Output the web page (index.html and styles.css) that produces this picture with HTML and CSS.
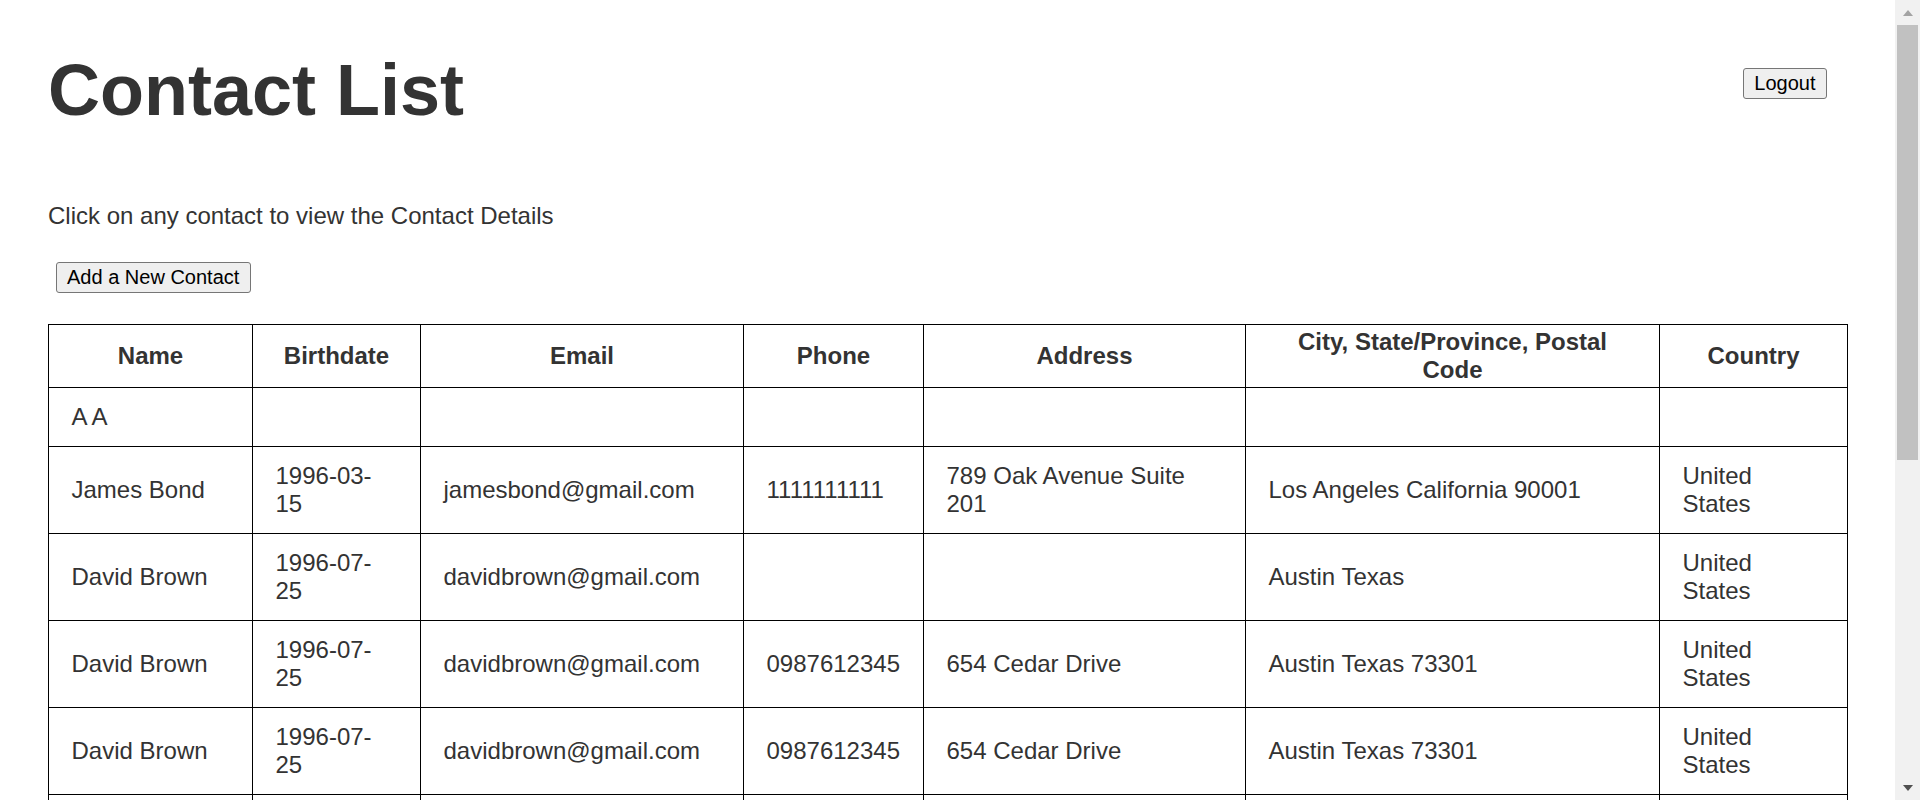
FILE: index.html
```html
<!DOCTYPE html>
<html lang="en">
<head>
<meta charset="utf-8">
<title>My Contacts</title>
<link rel="stylesheet" href="styles.css">
</head>
<body>
<div class="page">
  <header class="header">
    <h1 class="title">Contact List</h1>
    <button class="btn logout" type="button">Logout</button>
  </header>
  <p class="intro">Click on any contact to view the Contact Details</p>
  <div class="actions">
    <button class="btn" type="button">Add a New Contact</button>
  </div>
  <table class="contacts">
    <colgroup>
      <col class="c-name">
      <col class="c-birth">
      <col class="c-email">
      <col class="c-phone">
      <col class="c-addr">
      <col class="c-city">
      <col class="c-country">
    </colgroup>
    <thead>
      <tr>
        <th>Name</th>
        <th>Birthdate</th>
        <th>Email</th>
        <th>Phone</th>
        <th>Address</th>
        <th>City, State/Province, Postal Code</th>
        <th>Country</th>
      </tr>
    </thead>
    <tbody>
      <tr>
        <td>A A</td><td></td><td></td><td></td><td></td><td></td><td></td>
      </tr>
      <tr>
        <td>James Bond</td><td>1996-03-15</td><td>jamesbond@gmail.com</td><td>1111111111</td><td>789 Oak Avenue Suite 201</td><td>Los Angeles California 90001</td><td>United States</td>
      </tr>
      <tr>
        <td>David Brown</td><td>1996-07-25</td><td>davidbrown@gmail.com</td><td></td><td></td><td>Austin Texas</td><td>United States</td>
      </tr>
      <tr>
        <td>David Brown</td><td>1996-07-25</td><td>davidbrown@gmail.com</td><td>0987612345</td><td>654 Cedar Drive</td><td>Austin Texas 73301</td><td>United States</td>
      </tr>
      <tr>
        <td>David Brown</td><td>1996-07-25</td><td>davidbrown@gmail.com</td><td>0987612345</td><td>654 Cedar Drive</td><td>Austin Texas 73301</td><td>United States</td>
      </tr>
      <tr>
        <td>David Brown</td><td>1996-07-25</td><td>davidbrown@gmail.com</td><td>0987612345</td><td>654 Cedar Drive</td><td>Austin Texas 73301</td><td>United States</td>
      </tr>
    </tbody>
  </table>
</div>
<div class="scrollbar" aria-hidden="true">
  <div class="sb-btn"><span class="arrow-up"></span></div>
  <div class="sb-track">
    <div class="sb-thumb"></div>
  </div>
  <div class="sb-btn"><span class="arrow-down"></span></div>
</div>
</body>
</html>
```

FILE: styles.css
```css
html, body {
  margin: 0;
  height: 100%;
}

body {
  display: flex;
  overflow: hidden;
  background: #fff;
  color: #333;
  font-family: "Liberation Sans", Arial, Helvetica, sans-serif;
  font-size: 24px;
  line-height: 28px;
}

.page {
  flex: 1;
  min-width: 0;
  padding: 0 48px;
  overflow: hidden;
}

.header {
  display: flex;
  justify-content: space-between;
  align-items: flex-start;
}

.title {
  margin: 50px 0 0;
  font-size: 72px;
  line-height: 80px;
  font-weight: bold;
  color: #333;
}

.btn {
  font-family: "Liberation Sans", Arial, Helvetica, sans-serif;
  font-size: 20px;
  line-height: 23px;
  color: #000;
  background: #efefef;
  border: 1px solid #767676;
  border-radius: 3px;
  padding: 3px 10.5px;
  margin: 0;
}

.logout {
  margin: 68px 20px 0 0;
}

.intro {
  margin: 72px 0 0;
}

.actions {
  margin: 32px 0 0 7.5px;
}

.contacts {
  margin-top: 31px;
  width: 1800px;
  table-layout: fixed;
  border-collapse: collapse;
}

.c-name { width: 204px; }
.c-birth { width: 168px; }
.c-email { width: 323px; }
.c-phone { width: 180px; }
.c-addr { width: 322px; }
.c-city { width: 414px; }
.c-country { width: 188px; }

.contacts th,
.contacts td {
  border: 1px solid #000;
  vertical-align: middle;
}

.contacts th {
  padding: 3px 22.5px;
  text-align: center;
  font-weight: bold;
}

.contacts td {
  padding: 15px 22.5px;
  text-align: left;
}

.scrollbar {
  width: 25px;
  flex: none;
  display: flex;
  flex-direction: column;
  background: #f1f1f1;
}

.sb-btn {
  height: 25px;
  display: flex;
  align-items: center;
  justify-content: center;
  flex: none;
}

.arrow-up {
  width: 0;
  height: 0;
  border-left: 5.5px solid transparent;
  border-right: 5.5px solid transparent;
  border-bottom: 6px solid #a3a3a3;
}

.arrow-down {
  width: 0;
  height: 0;
  border-left: 5.5px solid transparent;
  border-right: 5.5px solid transparent;
  border-top: 6px solid #505050;
}

.sb-track {
  flex: 1;
  padding: 0 2px;
}

.sb-thumb {
  height: 435px;
  background: #c1c1c1;
}
```
